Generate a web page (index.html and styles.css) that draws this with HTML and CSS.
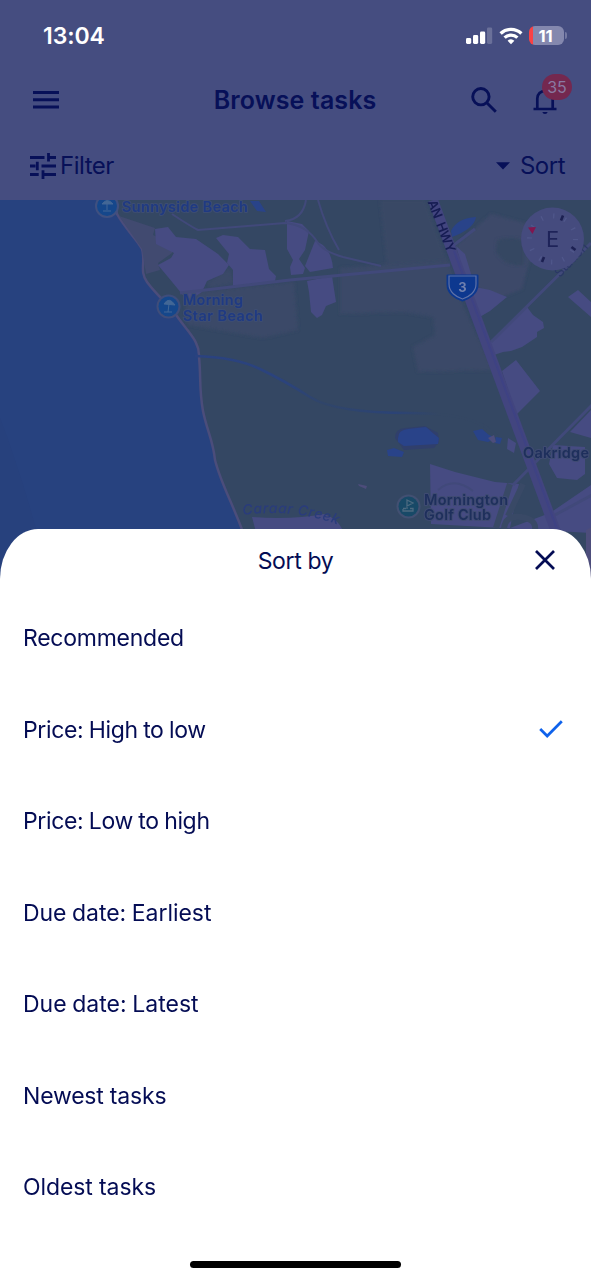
FILE: index.html
```html
<!DOCTYPE html>
<html lang="en">
<head>
<meta charset="utf-8">
<title>Browse tasks</title>
<link rel="stylesheet" href="styles.css">
</head>
<body>
<div class="screen">
  <header class="header">
    <div class="status">
      <span class="time">13:04</span>
      <div class="status-icons">
        <svg width="27" height="18" viewBox="0 0 27 18" fill="#fff">
          <rect x="0" y="11" width="5.2" height="6" rx="1.4"/><rect x="7" y="8" width="5.2" height="9" rx="1.4"/><rect x="14" y="4.5" width="5.2" height="12.5" rx="1.4"/><rect x="21" y="0.5" width="5.2" height="16.5" rx="1.4" opacity=".2"/>
        </svg>
        <svg width="24" height="18" viewBox="0 0 24 18" fill="none" stroke="#fff" stroke-width="3.3">
          <path d="M1.6 6.5a15 15 0 0 1 20.8 0M5.6 10.6a9.3 9.3 0 0 1 12.8 0"/><path d="M12 17.3l-3.4-3.5a5 5 0 0 1 6.8 0z" fill="#fff" stroke="none"/>
        </svg>
        <div class="battery"><span>11</span></div>
      </div>
    </div>
    <div class="titlebar">
      <svg class="menu" width="26" height="18" viewBox="0 0 26 18" fill="currentColor"><path d="M0 0h26v3H0zM0 7.200h26v3H0zM0 14.400h26v3H0z"/></svg>
      <h1 class="title">Browse tasks</h1>
      <div class="actions">
        <svg width="26" height="26" viewBox="0 0 26 26" fill="none" stroke="currentColor" stroke-width="2.9"><circle cx="9.9" cy="9.700" r="8.200"/><path d="M15.500 15.500l9.300 9.300"/></svg>
        <div class="bell">
          <svg width="24" height="30" viewBox="0 0 24 30" fill="none" stroke="currentColor" stroke-width="2.7"><path d="M.5 24h23M4.3 24V13.5a7.7 7.7 0 0 1 15.4 0V24"/><path d="M9.3 27h5.4a2.8 2.6 0 0 1-5.4 0z" fill="currentColor" stroke="none"/><path d="M12 3v3"/></svg>
          <span class="badge">35</span>
        </div>
      </div>
    </div>
    <div class="toolbar">
      <div class="filter">
        <svg width="26" height="26" viewBox="0 0 26 26" fill="none" stroke="currentColor" stroke-width="2.8"><path d="M0 4.5h14.5M18.5 0v8.6M18.5 4.5H26M0 13h5.5M7.3 8.7v8.6M11.5 13H26M0 21.5h8.7M13 17.3V26M13 21.5h13"/></svg>
        <span class="filter-label">Filter</span>
      </div>
      <div class="sort">
        <svg width="14" height="8" viewBox="0 0 14 8" fill="currentColor"><path d="M0 .3h14L7 7.5z"/></svg>
        <span class="sort-label">Sort</span>
      </div>
    </div>
  </header>

  <svg class="map" width="591" height="380" viewBox="0 200 591 380">
    <defs>
      <linearGradient id="stream" x1="195" x2="500" y1="0" y2="0" gradientUnits="userSpaceOnUse">
        <stop offset="0" stop-color="#2a4280"/><stop offset=".3" stop-color="#2b437c"/><stop offset=".42" stop-color="#304569"/><stop offset=".65" stop-color="#2b4376"/><stop offset=".8" stop-color="#344763"/>
      </linearGradient>
      <filter id="soft"><feGaussianBlur stdDeviation="1.500"/></filter>
    </defs>
    <rect y="200" width="591" height="380" fill="#27427f"/>
    <path d="M0 418Q20 470 39 540V580H0z" fill="#27417d"/>
    <!-- land -->
    <path d="M117 214C126 230 136 238 142 249C146 262 139 271 147 282C158 297 170 305 179 319C190 334 200 343 199 357C201 375 199 390 203 411C207 431 213 440 215 460C221 484 233 504 244 535V590H600V190H112z" fill="#344763" stroke="#4b4d7b" stroke-width="2.5"/>
    <path d="M119 216l36 12-2 7 20 10-1 8-14 10 2 7-14 4-4-25z" fill="#414a70"/>
    <!-- fields -->
    <g fill="#3a4867" filter="url(#soft)">
      <path d="M187 293l107-11 4 48-35 8-75-13-3-14z"/>
      <path d="M340 268l108-8 15 45 30 65-75 2-5-25 22-12-2-18-30-5-63 2z"/>
      <path d="M380 200h45l22 61-60 5z" opacity=".7"/>
      <path d="M456 246l35-32 37 10-8 22 10 12-8 31-20 8-20-6-18-15z" fill="#3d4969"/>
      <path d="M208 282l22-14 4 16-24 4z"/>
    </g>
    <path d="M497 240q22-5 27 3v22q-20 2-28-14z" fill="#344762" filter="url(#soft)"/>
    <g fill="#464b82">
      <path d="M155 229l13-2 8 10 20 2 22 15 11 11-6 9-16 7-5 11-14 9-6-7-14-17-10-12 13-7 3-5-18-9z"/>
      <path d="M216 238l7-3 15 2 12 12 15 1 4 19 7 7-1 5-42 5v-16l-6-7 2-9z"/>
      <path d="M287 221l15 3 7 7-4 19-6 9 6 9-2 6-12 1-1-8 3-7-6-11zM315 241q16 5 18 27l-23 4-5-6z"/>
      <path d="M307 281l25-5 4 26-10 4-4 9-5 3-6-6-2-20z"/>
      <path d="M456 246l9 8 10 33 15 3 17 7-17 14-12 7-13-40z"/>
      <path d="M489 343l38-36 6 8 10 7 1 6-7 4v5l-15 10-11 4-8 1-9 3-3-5z"/>
      <path d="M568 297l10-7 13 12v15zM502 371l14-11 24 31-24 24zM570 432l21-22v28z"/>
      <path d="M430 464l25 8 40 10 24 2-9 44 40-15 41-28v48l-160-9z"/>
      <path d="M252 517q40 3 72-3 21 7 21 30l-88-8z"/>
      <path d="M553 445l32 2v27l-8 6-20-2-8-14zM508 438l8 5-2 10-7-4z"/>
    </g>
    <path d="M510 484l-14 44M504 529q1-14 17-12t14 14M523 484l-15 32" fill="none" stroke="#394966" stroke-width="6"/>
    <path d="M438 490q16-14 35 1" fill="none" stroke="#41497a" stroke-width="2"/>
    <!-- roads -->
    <g fill="none" stroke="#41497a">
      <path d="M172 214q18 12 26 16l87-7q22 2 33 20 5 8 25 14l38 9M318 200q8 28 21 50M285 221q18-2 21-21" stroke-width="2"/>
      <path d="M180 293l110-13 160-15" stroke-width="3"/>
      <path d="M591 243l-100 99M513 485l79-80M555 515l37-20M450 248l25-19" stroke-width="3"/>
      <path d="M195 356q40 1 65 13t50 28 100 16 90 28" stroke="url(#stream)" stroke-width="2.5"/>
      <path d="M433 200L559 540" stroke="#42457f" stroke-width="10"/>
      <path d="M454 251L563 545" stroke="#3e4284" stroke-width="2"/>
    </g>
    <!-- water bodies -->
    <path d="M395 438q0-9 10-10l20-2 13 7 1 9-5 6-30 2z" fill="#303f6c"/>
    <g fill="#294389">
      <path d="M398 438q0-8 10-9l18-2 8 7 5 4-1 6-34 2-6-4zM387 450l7-2 10 4-2 5-14-1zM473 431l9-2 7 6 7 3-8 4-10-2zM451 231q6-13 25-14-2 12-24 20zM250 201h9l7 11-9-1zM496 437l6 1-2 6-5-1z"/>
    </g>
    <path d="M488 438l6-3 2 7-3 1zM358 484l9 2-1 3-7-3zM586 530l6-3v56h-6z" fill="#4d4d7b"/>
    <!-- pins -->
    <g>
      <circle cx="107" cy="206" r="12" fill="#3f5080"/><circle cx="107" cy="206" r="10" fill="#15478b"/>
      <path d="M102 204q5-7 11 0zM107 203v7M103 211h8" fill="#426796" stroke="#426796"/>
      <circle cx="168.500" cy="306.500" r="12" fill="#3f4d7a"/><circle cx="168.500" cy="306.500" r="10" fill="#15478b"/>
      <path d="M164 304q5-8 11 1zM169 304l-1 8M164 312h8" fill="#426796" stroke="#426796"/>
      <circle cx="408.500" cy="506.500" r="12" fill="#425072"/><circle cx="408.500" cy="506.500" r="10" fill="#184967"/>
      <path d="M407 500l6 3-6 3zM407 500v9M403 508.500h3M410 508.500h3v2.500h-10v-2" fill="none" stroke="#4c6a80" stroke-width="1.300"/>
    </g>
    <!-- labels -->
    <g class="map-label beach">
      <text x="122" y="211.500" textLength="126">Sunnyside Beach</text>
      <text x="183" y="305" textLength="60">Morning</text>
      <text x="183" y="320.500" textLength="80">Star Beach</text>
    </g>
    <g class="map-label place">
      <text x="523" y="457.500" textLength="66">Oakridge</text>
      <text x="424" y="504.500" textLength="84">Mornington</text>
      <text x="424" y="520" textLength="67">Golf Club</text>
    </g>
    <path id="creek" d="M243 515q50-7 96 10" fill="none"/>
    <text class="creek"><textPath href="#creek" textLength="96">Caraar Creek</textPath></text>
    <text class="highway" transform="translate(427.500 202) rotate(69)" textLength="55">AN HWY</text>
    <text class="street" transform="translate(560 278) rotate(-47)" textLength="42">Station</text>
    <path d="M447.500 275.500h30v9c0 9-8 14-15 16-7-2-15-7-15-16z" fill="#0d388f" stroke="#0d388f" stroke-width="2" stroke-linejoin="round"/>
    <path d="M449 276h27v8c0 8-7 13-13.500 15-6.500-2-13.500-7-13.500-15z" fill="none" stroke="#5f72a8" stroke-width="1.200"/>
    <text class="shield" x="462.500" y="291.500">3</text>
    <!-- compass -->
    <circle cx="552.500" cy="239" r="31.500" fill="#454b7e"/>
    <circle cx="552.500" cy="239" r="23" fill="none" stroke="#50578b" stroke-width="5" stroke-dasharray="1.300 10.740"/>
    <path d="M563 215.500l-2 5M575.500 250l-4-3M542 262l2-5" stroke="#1c2052" stroke-width="2.600"/>
    <path d="M528 227.500l8-.5-3.500 7z" fill="#81164f"/>
    <text class="compass" x="552.500" y="247">E</text>
  </svg>

  <main class="sheet">
    <div class="sheet-head">
      <h2 class="sheet-title">Sort by</h2>
      <svg class="close" width="20" height="20" viewBox="0 0 20 20" fill="none" stroke="currentColor" stroke-width="2.7"><path d="M1 1l18 18M19 1L1 19"/></svg>
    </div>
    <ul class="options">
      <li><span class="o1">Recommended</span></li>
      <li><span class="o2">Price: High to low</span><svg width="24" height="18" viewBox="0 0 24 18" fill="none" stroke="#0f62eb" stroke-width="2.700"><path d="M1.200 9l7 7L22.800 1.200"/></svg></li>
      <li><span class="o3">Price: Low to high</span></li>
      <li><span class="o4">Due date: Earliest</span></li>
      <li><span class="o5">Due date: Latest</span></li>
      <li><span class="o6">Newest tasks</span></li>
      <li><span class="o7">Oldest tasks</span></li>
    </ul>
    <div class="home"></div>
  </main>
</div>
</body>
</html>
```
FILE: styles.css
```css
* { box-sizing: border-box; }
body { margin: 0; font-family: Inter, "Liberation Sans", sans-serif; }
svg { display: block; flex: none; }
h1, h2, ul { margin: 0; padding: 0; font-weight: 400; }
.screen { width: 591px; height: 1280px; overflow: hidden; display: flex; flex-direction: column; background: #fff; }
.header { height: 200px; flex: none; background: #454d80; color: #071058; }
.status { height: 70px; padding: 1px 27px 0 43px; display: flex; align-items: center; justify-content: space-between; color: #fff; }
.time { font-size: 23px; font-weight: 600; letter-spacing: -.1px; padding-top: 1px; }
.status-icons { display: flex; align-items: center; gap: 6px; }
.battery { position: relative; width: 35px; height: 19px; border-radius: 6px; background: linear-gradient(90deg, #fa4245 4px, #8488ae 4px); display: flex; align-items: center; justify-content: center; font-size: 16.5px; font-weight: 700; padding-right: 2px; }
.battery::after { content: ""; position: absolute; left: 36px; top: 6px; width: 2px; height: 7px; border-radius: 0 2px 2px 0; background: #7479a2; }
.titlebar { height: 60px; padding: 0 34px 0 33px; display: grid; grid-template-columns: 1fr auto 1fr; align-items: center; }
.title { font-size: 25px; font-weight: 600; letter-spacing: .1px; white-space: nowrap; padding-bottom: 1px; }
.actions { display: flex; justify-content: flex-end; align-items: center; gap: 36px; }
.bell { position: relative; }
.badge { position: absolute; left: 9px; top: -11px; width: 30px; height: 26px; border-radius: 13px; background: #74284f; color: #8a7aa2; font-size: 16px; line-height: 26px; text-align: center; }
.toolbar { height: 70px; padding: 1px 26px 0 30px; display: flex; justify-content: space-between; align-items: center; font-size: 24px; }
.filter { display: flex; align-items: center; gap: 4px; }
.filter-label { letter-spacing: -.5px; }
.sort { display: flex; align-items: center; gap: 10px; }
.sort-label { letter-spacing: -.5px; }
.map { height: 380px; }
.map-label { font-size: 14.5px; font-weight: 600; paint-order: stroke; stroke-width: 2px; stroke-linejoin: round; }
.beach { fill: #1f3a83; stroke: #3d4d72; }
.place { fill: #1e2f5c; stroke: #3f4b72; }
.creek { font-size: 14px; font-style: italic; font-weight: 500; fill: #2a3c7c; }
.highway { font-size: 13px; font-weight: 600; fill: #161c53; word-spacing: 3px; }
.street { font-size: 13px; fill: #2b3766; }
.shield { font-size: 13px; font-weight: 700; fill: #7080ae; text-anchor: middle; }
.compass { font-size: 22px; fill: #1e2359; text-anchor: middle; }
.sheet { position: relative; margin-top: -51px; height: 751px; flex: none; background: #fff; border-radius: 38px 38px 0 0 / 50px 50px 0 0; color: #040c54; display: flex; flex-direction: column; }
.sheet-head { height: 63px; padding: 0 36px 2px; display: grid; grid-template-columns: 1fr auto 1fr; align-items: center; }
.sheet-title { grid-column: 2; font-size: 23px; letter-spacing: -.35px; padding-top: 2px; }
.close { justify-self: end; }
.options { list-style: none; font-size: 23px; }
.options li { height: 91.5px; padding: 0 28px 0 23px; display: flex; align-items: center; justify-content: space-between; }
.options span { padding-top: 1px; }
.o1 { letter-spacing: -.25px; }
.o2 { letter-spacing: -.35px; word-spacing: -.7px; }
.o3 { letter-spacing: -.35px; word-spacing: -.7px; }
.o4 { letter-spacing: -.05px; word-spacing: -.8px; }
.o5 { letter-spacing: 0; word-spacing: -.8px; }
.o6 { letter-spacing: -.2px; }
.o7 { letter-spacing: -.1px; }
.home { width: 211px; height: 7px; border-radius: 4px; background: #000; margin: auto auto 12px; }
```
